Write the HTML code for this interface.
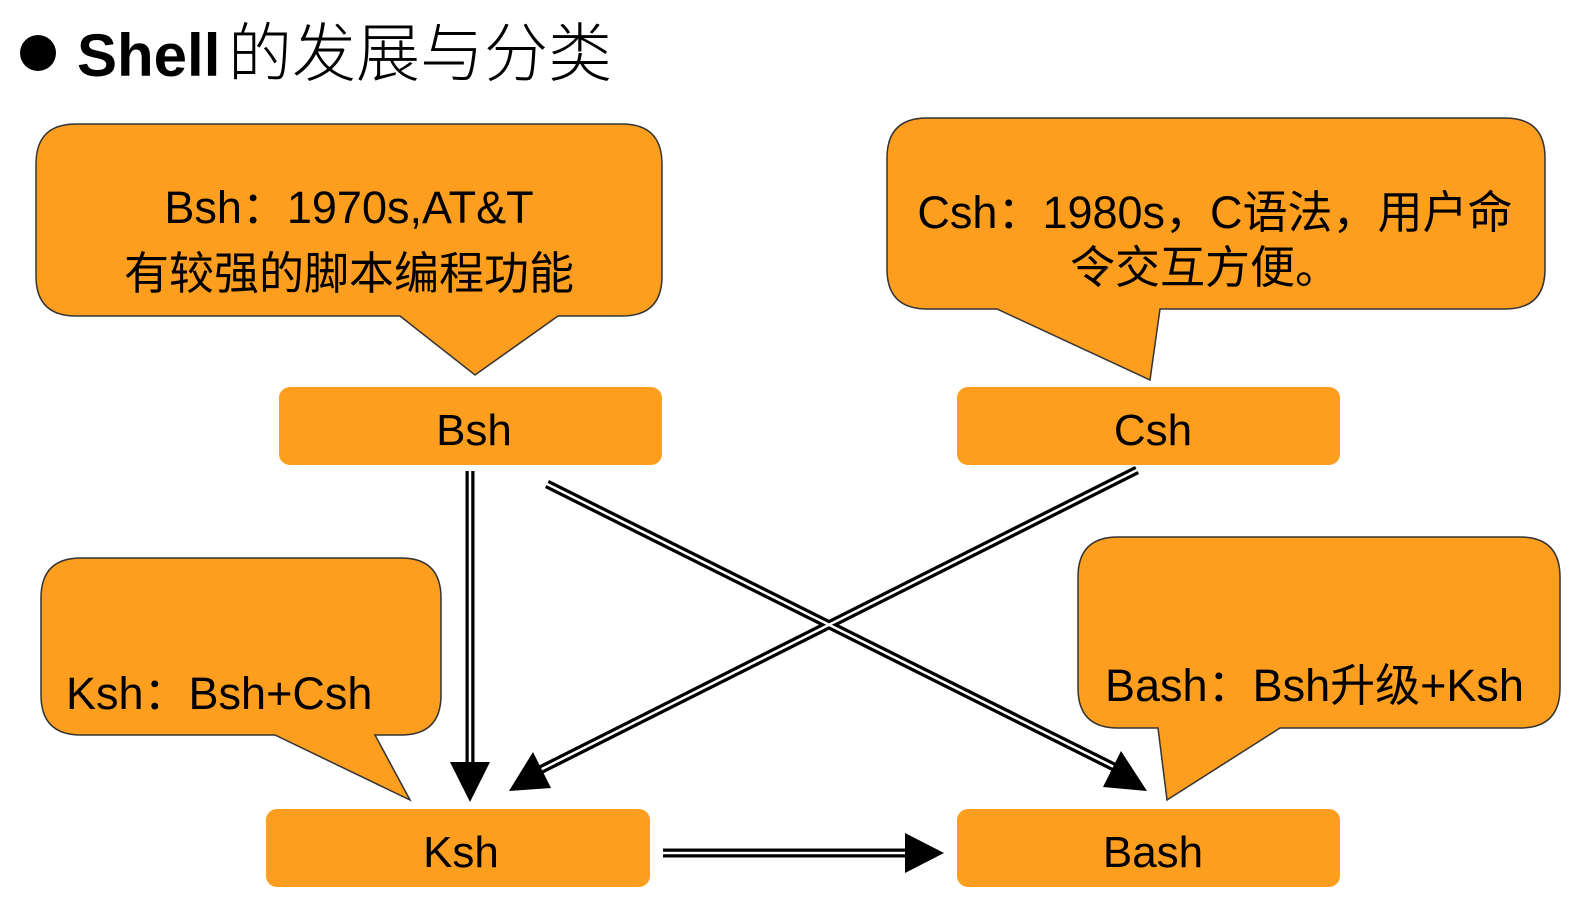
<!DOCTYPE html>
<html><head><meta charset="utf-8"><style>
html,body{margin:0;padding:0;background:#fff;overflow:hidden;width:1594px;height:913px}
svg{display:block}
text{font-family:"Liberation Sans","Noto Sans CJK SC",sans-serif;fill:#000}
</style></head><body>
<svg width="1594" height="913" viewBox="0 0 1594 913">
<circle cx="38" cy="53" r="18" fill="#000"/>
<text x="77" y="76" font-size="60" font-weight="bold">Shell</text>
<text x="228" y="76" font-size="64" style="font-family:'Noto Sans CJK SC',sans-serif;font-weight:300">的发展与分类</text>

<g fill="#FD9E1F" stroke="#333" stroke-width="1.5">
<path d="M76,124 H622 Q662,124 662,164 V276 Q662,316 622,316 H558 L475,375 L400,316 H76 Q36,316 36,276 V164 Q36,124 76,124 Z"/>
<path d="M927,118 H1505 Q1545,118 1545,158 V269 Q1545,309 1505,309 H1160 L1150,380 L997,309 H927 Q887,309 887,269 V158 Q887,118 927,118 Z"/>
<path d="M81,558 H401 Q441,558 441,598 V695 Q441,735 401,735 H375 L410,800 L275,735 H81 Q41,735 41,695 V598 Q41,558 81,558 Z"/>
<path d="M1118,537 H1520 Q1560,537 1560,577 V688 Q1560,728 1520,728 H1280 L1167,800 L1158,728 H1118 Q1078,728 1078,688 V577 Q1078,537 1118,537 Z"/>
</g>
<g fill="#FD9E1F">
<rect x="279" y="387" width="383" height="78" rx="11"/>
<rect x="957" y="387" width="383" height="78" rx="11"/>
<rect x="266" y="809" width="384" height="78" rx="11"/>
<rect x="957" y="809" width="383" height="78" rx="11"/>
</g>
<g font-size="44" text-anchor="middle">
<text x="474" y="445">Bsh</text>
<text x="1153" y="445">Csh</text>
<text x="461" y="867">Ksh</text>
<text x="1153" y="867">Bash</text>
</g>
<g font-size="45">
<text x="349" y="223" text-anchor="middle">Bsh：1970s,AT&amp;T</text>
<text x="349" y="289" text-anchor="middle">有较强的脚本编程功能</text>
<text x="1215" y="228" text-anchor="middle">Csh：1980s，C语法，用户命</text>
<text x="1205" y="283" text-anchor="middle">令交互方便。</text>
<text x="66" y="709">Ksh：Bsh+Csh</text>
<text x="1105" y="701">Bash：Bsh升级+Ksh</text>
</g>

<g stroke="#000" stroke-width="9" fill="none">
<line x1="470" y1="471" x2="470" y2="765"/>
<line x1="547" y1="484" x2="1122" y2="771"/>
<line x1="1137" y1="470" x2="538" y2="771"/>
<line x1="663" y1="853" x2="907" y2="853"/>
</g>
<g stroke="#fff" stroke-width="2.5" fill="none">
<line x1="470" y1="471" x2="470" y2="765"/>
<line x1="547" y1="484" x2="1122" y2="771"/>
<line x1="1137" y1="470" x2="538" y2="771"/>
<line x1="663" y1="853" x2="907" y2="853"/>
</g>
<g fill="#000">
<polygon points="450,762 490,762 470,802"/>
<polygon points="1147,791 1103,787 1121,751"/>
<polygon points="509,791 533,752 551,788"/>
<polygon points="905,833 905,873 944,853"/>
</g>
</svg>
</body></html>
